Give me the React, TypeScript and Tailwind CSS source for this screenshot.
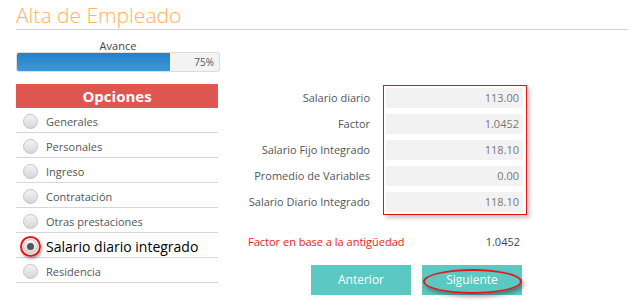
import React from 'react';

const options = [
  'Generales',
  'Personales',
  'Ingreso',
  'Contratación',
  'Otras prestaciones',
  'Salario diario integrado',
  'Residencia',
];

const fields = [
  { label: 'Salario diario', value: '113.00' },
  { label: 'Factor', value: '1.0452' },
  { label: 'Salario Fijo Integrado', value: '118.10' },
  { label: 'Promedio de Variables', value: '0.00' },
  { label: 'Salario Diario Integrado', value: '118.10' },
];

function Radio({ checked }: { checked?: boolean }) {
  return (
    <span className="relative flex h-[15px] w-[15px] flex-shrink-0 items-center justify-center rounded-full border border-[#c4c4c4] bg-gradient-to-b from-[#f4f4f4] to-[#d6d6d6]">
      {checked && <span className="h-[7px] w-[7px] rounded-full bg-[#555]" />}
      {checked && (
        <span className="absolute -inset-[4px] rounded-full border-2 border-[#e8141c] shadow-[1px_2px_3px_rgba(0,0,0,0.35)]" />
      )}
    </span>
  );
}

export default function App() {
  const selected = 'Salario diario integrado';

  return (
    <div className="h-[305px] w-[633px] overflow-hidden bg-white text-[#555] [font-family:'Open_Sans',sans-serif]">
      {/* Title */}
      <div className="mx-[16px] h-[30px] w-[612px] border-b border-[#d2d2d2]">
        <h1 className="pt-[1px] text-[21px] font-light leading-[28px] text-[#ffb064]">Alta de Empleado</h1>
      </div>

      <div className="flex">
        {/* Left column */}
        <div className="ml-[16px] w-[204px]">
          <div className="mt-[9px] text-center text-[11px] leading-[13px] text-[#444]">Avance</div>
          <div className="flex h-[20px] overflow-hidden rounded-[3px] border border-[#dcdcdc] bg-[#f3f3f3]">
            <div className="h-full w-[153px] bg-gradient-to-b from-[#2580c8] to-[#3d98d8]" />
            <div className="flex flex-1 items-center justify-end pr-[5px] text-[10px] text-[#555]">75%</div>
          </div>

          <div className="mt-[12px] w-[202px]">
            <div className="flex h-[24px] items-center justify-center bg-[#df5650] text-[15px] font-bold text-white">
              Opciones
            </div>
            {options.map((o) => (
              <div key={o} className="flex h-[25px] items-center gap-[8px] border-b border-[#d6d6d6] pl-[7px] pt-[3px]">
                <Radio checked={o === selected} />
                <span className={o === selected ? 'text-[14px] leading-[18px] text-black' : 'text-[11px] leading-[16px] text-[#555]'}>{o}</span>
              </div>
            ))}
          </div>
        </div>

        {/* Right column */}
        <div className="flex-1 pt-[55px]">
          <div className="flex">
            <div className="flex w-[150px] flex-col gap-[6px] pt-[3px]">
              {fields.map((f) => (
                <div key={f.label} className="flex h-[20px] items-center justify-end text-[11px] text-[#555]">
                  {f.label}
                </div>
              ))}
            </div>
            <div className="ml-[13px] flex w-[144px] flex-col gap-[6px] border border-[#e01414] p-[2px] pr-[3px] shadow-[3px_3px_4px_rgba(0,0,0,0.22)]">
              {fields.map((f) => (
                <div key={f.label} className="flex h-[20px] items-center justify-end bg-[#f2f2f2] pr-[4px] text-[11px] text-[#777]">
                  {f.value}
                </div>
              ))}
            </div>
          </div>

          <div className="ml-[28px] mt-[19px] flex w-[272px] items-center justify-between text-[11px] leading-[16px]">
            <span className="text-[#f01818]">Factor en base a la antigüedad</span>
            <span className="text-[#444]">1.0452</span>
          </div>

          <div className="ml-[91px] mt-[15px] flex gap-[11px]">
            <button className="h-[30px] w-[100px] bg-[#5bc8c1] text-[12px] text-white">Anterior</button>
            <button className="relative h-[30px] w-[100px] bg-[#5bc8c1] text-[12px] text-white">
              Siguiente
              <span className="absolute left-[1px] right-[0px] top-[4px] bottom-[1px] rounded-[50%] border-2 border-[#e8141c] shadow-[2px_3px_4px_rgba(0,0,0,0.35)]" />
            </button>
          </div>
        </div>
      </div>
    </div>
  );
}
